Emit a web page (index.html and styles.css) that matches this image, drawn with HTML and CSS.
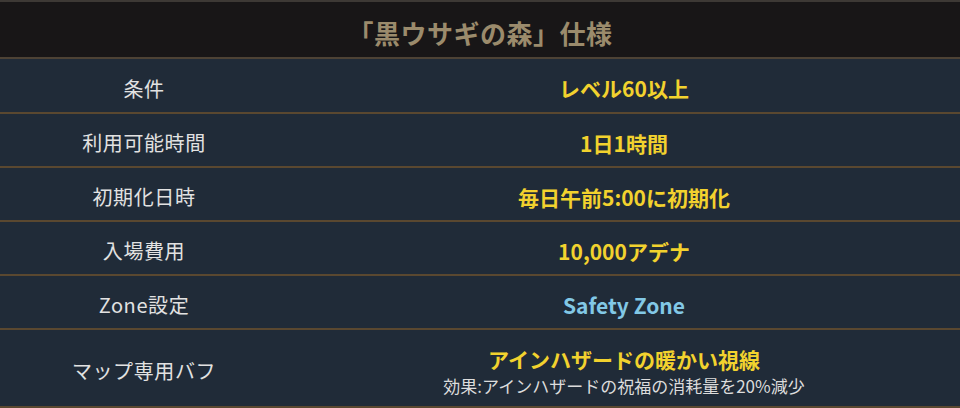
FILE: index.html
```html
<!DOCTYPE html>
<html lang="ja">
<head>
<meta charset="utf-8">
<link rel="stylesheet" href="styles.css">
</head>
<body>
<div class="spec">
  <div class="spec-title">「黒ウサギの森」仕様</div>
  <div class="row">
    <div class="label">条件</div>
    <div class="value">レベル60以上</div>
  </div>
  <div class="row">
    <div class="label">利用可能時間</div>
    <div class="value">1日1時間</div>
  </div>
  <div class="row">
    <div class="label">初期化日時</div>
    <div class="value">毎日午前5:00に初期化</div>
  </div>
  <div class="row">
    <div class="label">入場費用</div>
    <div class="value">10,000アデナ</div>
  </div>
  <div class="row">
    <div class="label">Zone設定</div>
    <div class="value value-blue">Safety Zone</div>
  </div>
  <div class="row row-tall">
    <div class="label">マップ専用バフ</div>
    <div class="value value-stack">
      <span class="main">アインハザードの暖かい視線</span>
      <span class="note">効果:アインハザードの祝福の消耗量を20%減少</span>
    </div>
  </div>
</div>
</body>
</html>
```
FILE: styles.css
```css
html, body {
  margin: 0;
  padding: 0;
  background: #202b38;
}
body {
  font-family: "Noto Sans CJK JP", "Noto Sans", sans-serif;
}
.spec {
  width: 960px;
}
.spec-title {
  box-sizing: content-box;
  height: 50px;
  padding-top: 5px;
  border-top: 2px solid #3d3935;
  border-bottom: 2px solid #4d4235;
  background: #181617;
  color: #9b8b6c;
  font-size: 26px;
  font-weight: 700;
  letter-spacing: 0.5px;
  display: flex;
  align-items: center;
  justify-content: center;
}
.row {
  display: grid;
  grid-template-columns: 30% 70%;
  height: 53px;
  border-bottom: 2px solid #5a4830;
  background: #202b38;
}
.row + .row {
  height: 52px;
}
.row-tall.row {
  height: 76px;
}
.label, .value {
  display: flex;
  align-items: center;
  justify-content: center;
}
.label {
  color: #e2e2e2;
  font-size: 20px;
  letter-spacing: 0.6px;
  padding-top: 5px;
}
.value {
  color: #f2d22e;
  font-size: 21px;
  font-weight: 700;
  padding-top: 5px;
}
.value-blue {
  color: #82c8e6;
}
.value-stack {
  flex-direction: column;
  justify-content: flex-start;
  padding-top: 15px;
}
.main {
  display: block;
  line-height: 28px;
}
.note {
  display: block;
  line-height: 26px;
  color: #dcdcdc;
  font-size: 17px;
  font-weight: 400;
}
```
